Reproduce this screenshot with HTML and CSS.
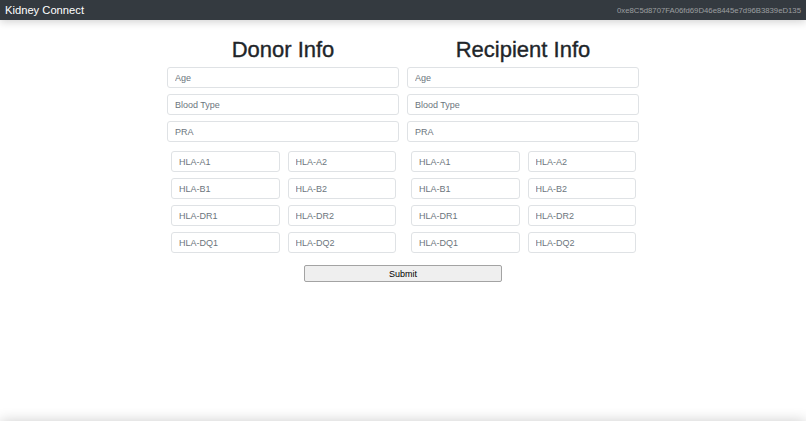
FILE: index.html
```html
<!DOCTYPE html>
<html>
<head>
<meta charset="utf-8">
<link rel="stylesheet" href="styles.css">
</head>
<body>
<nav class="navbar">
  <span class="brand">Kidney Connect</span>
  <span class="account">0xe8C5d8707FA06fd69D46e8445e7d96B3839eD135</span>
</nav>
<main class="container">
  <div class="columns">
    <section class="col">
      <h2 class="title">Donor Info</h2>
      <input class="field" placeholder="Age">
      <input class="field" placeholder="Blood Type">
      <input class="field" placeholder="PRA">
      <div class="hla">
        <input class="field" placeholder="HLA-A1">
        <input class="field" placeholder="HLA-A2">
        <input class="field" placeholder="HLA-B1">
        <input class="field" placeholder="HLA-B2">
        <input class="field" placeholder="HLA-DR1">
        <input class="field" placeholder="HLA-DR2">
        <input class="field" placeholder="HLA-DQ1">
        <input class="field" placeholder="HLA-DQ2">
      </div>
    </section>
    <section class="col">
      <h2 class="title">Recipient Info</h2>
      <input class="field" placeholder="Age">
      <input class="field" placeholder="Blood Type">
      <input class="field" placeholder="PRA">
      <div class="hla">
        <input class="field" placeholder="HLA-A1">
        <input class="field" placeholder="HLA-A2">
        <input class="field" placeholder="HLA-B1">
        <input class="field" placeholder="HLA-B2">
        <input class="field" placeholder="HLA-DR1">
        <input class="field" placeholder="HLA-DR2">
        <input class="field" placeholder="HLA-DQ1">
        <input class="field" placeholder="HLA-DQ2">
      </div>
    </section>
  </div>
  <div class="actions">
    <button class="submit">Submit</button>
  </div>
</main>
<footer class="footer"></footer>
</body>
</html>
```
FILE: styles.css
```css
html, body {
  margin: 0;
  padding: 0;
  background: #fff;
  font-family: "Liberation Sans", Arial, sans-serif;
  color: #212529;
}
.navbar {
  height: 20px;
  background: #343a40;
  display: flex;
  align-items: center;
  justify-content: space-between;
  padding: 0 5px;
  box-shadow: 0 2px 8px rgba(0, 0, 0, 0.18);
  position: relative;
  z-index: 1;
}
.brand {
  color: #fff;
  font-size: 11.2px;
}
.account {
  color: rgba(255, 255, 255, 0.5);
  font-size: 7.75px;
}
.container {
  width: 472px;
  margin: 0 auto;
  padding-top: 17px;
}
.columns {
  display: grid;
  grid-template-columns: 1fr 1fr;
  column-gap: 8px;
}
.col {
  display: flex;
  flex-direction: column;
}
.title {
  margin: 0 0 4px;
  font-size: 22px;
  font-weight: 500;
  line-height: 26px;
  text-align: center;
  color: #212529;
  -webkit-text-stroke: 0.35px #212529;
}
.field {
  box-sizing: border-box;
  height: 21px;
  margin: 0 0 6px;
  padding: 0 7px;
  border: 1px solid #dfe2e5;
  border-radius: 3px;
  font-family: "Liberation Sans", Arial, sans-serif;
  font-size: 9px;
  color: #495057;
  background: #fff;
  width: 100%;
}
.field::placeholder {
  color: #6c757d;
}
.hla {
  display: grid;
  grid-template-columns: 1fr 1fr;
  column-gap: 8px;
  padding: 3px 3px 0 4px;
}
.actions {
  display: flex;
  justify-content: center;
  padding-top: 6px;
}
.submit {
  width: 198px;
  height: 17px;
  background: #efefef;
  border: 1px solid #a3a3a3;
  border-radius: 2px;
  font-family: "Liberation Sans", Arial, sans-serif;
  font-size: 9px;
  font-weight: 400;
  color: #000;
  padding: 0;
}
.footer {
  position: fixed;
  left: 0;
  right: 0;
  bottom: -20px;
  height: 20px;
  box-shadow: 0 0 14px rgba(0, 0, 0, 0.2);
  background: #fff;
}
```
